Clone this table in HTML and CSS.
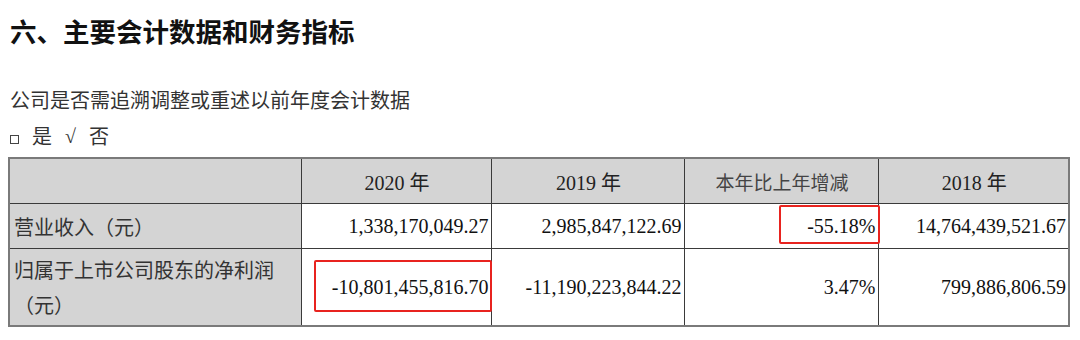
FILE: index.html
```html
<!DOCTYPE html>
<html lang="zh">
<head>
<meta charset="utf-8">
<link rel="stylesheet" href="styles.css">
</head>
<body>
<div class="page">
  <h1 class="title">六、主要会计数据和财务指标</h1>
  <p class="question">公司是否需追溯调整或重述以前年度会计数据</p>
  <p class="choice"><span class="box"></span><span>是</span><span class="tick">√</span><span>否</span></p>
  <table class="data">
    <colgroup>
      <col class="c0"><col class="c1"><col class="c2"><col class="c3"><col class="c4">
    </colgroup>
    <tr class="head">
      <th></th>
      <th>2020 年</th>
      <th>2019 年</th>
      <th class="soft">本年比上年增减</th>
      <th>2018 年</th>
    </tr>
    <tr class="r1">
      <td class="label">营业收入（元）</td>
      <td class="num">1,338,170,049.27</td>
      <td class="num">2,985,847,122.69</td>
      <td class="num mark-cell"><span class="mark mark-a"></span>-55.18%</td>
      <td class="num">14,764,439,521.67</td>
    </tr>
    <tr class="r2">
      <td class="label">归属于上市公司股东的净利润<br>（元）</td>
      <td class="num mark-cell"><span class="mark mark-b"></span>-10,801,455,816.70</td>
      <td class="num">-11,190,223,844.22</td>
      <td class="num">3.47%</td>
      <td class="num">799,886,806.59</td>
    </tr>
  </table>
</div>
</body>
</html>
```
FILE: styles.css
```css
html, body {
  margin: 0;
  padding: 0;
  background: #fff;
}
.page {
  padding: 0 8px;
  font-family: "Liberation Serif", "Noto Sans CJK SC", serif;
  color: #222;
}
.title {
  margin: 0;
  padding: 13px 0 0 2px;
  height: 38px;
  line-height: 36px;
  font-size: 26.5px;
  font-weight: bold;
  font-family: "Noto Sans CJK SC", sans-serif;
  color: #111;
}
.question {
  margin: 0;
  padding: 34px 0 0 2px;
  height: 30px;
  line-height: 30px;
  font-size: 20px;
  font-family: "Noto Sans CJK SC", sans-serif;
  color: #333;
}
.choice {
  margin: 0;
  padding: 6px 0 0 2px;
  height: 30px;
  line-height: 30px;
  font-size: 20px;
  font-family: "Noto Sans CJK SC", sans-serif;
  color: #333;
  display: flex;
  align-items: center;
  gap: 13px;
}
.choice .box {
  width: 7px;
  height: 7px;
  border: 1px solid #444;
  margin-top: 6px;
}
.choice .tick {
  font-family: "Liberation Serif", serif;
  font-size: 20px;
}
.data {
  margin-top: 6px;
  border-collapse: collapse;
  width: 1060px;
  table-layout: fixed;
  border: 2px solid #7a7a7a;
  font-size: 20px;
}
.c0 { width: 292px; }
.c1 { width: 190px; }
.c2 { width: 193px; }
.c3 { width: 194px; }
.c4 { width: 191px; }
.data th, .data td {
  border: 1px solid #3a3a3a;
  padding: 0 2px 0 4px;
}
.head th {
  height: 44px;
  background: #d4d4d4;
  font-weight: normal;
  text-align: center;
  color: #222;
}
.head th.soft {
  color: #444;
  font-family: "Noto Sans CJK SC", sans-serif;
  font-size: 19px;
}
.r1 td { height: 44px; }
.r2 td { height: 76px; }
.label {
  background: #d4d4d4;
  font-family: "Noto Sans CJK SC", sans-serif;
  font-size: 20px;
  color: #333;
  line-height: 35px;
  text-align: left;
}
.num {
  text-align: right;
  color: #111;
}
.mark-cell {
  position: relative;
}
.mark {
  position: absolute;
  border: 2px solid #e8231f;
  border-radius: 2px;
}
.mark-a {
  left: 94px;
  top: 1px;
  right: -2px;
  bottom: 4px;
}
.mark-b {
  left: 12px;
  top: 11px;
  right: -1px;
  bottom: 13px;
}
```
